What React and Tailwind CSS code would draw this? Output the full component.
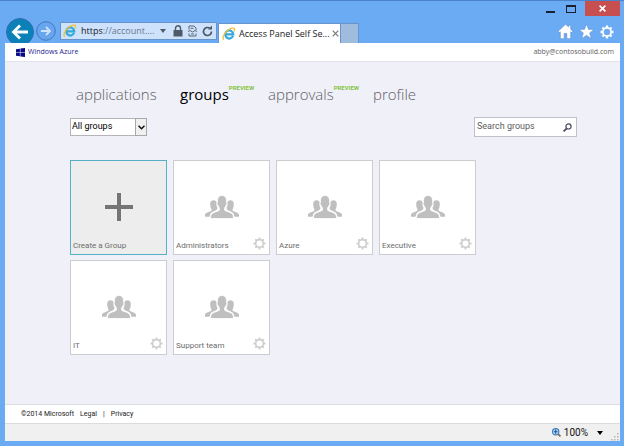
import React from "react";

const tabs = [
  { label: "applications", width: "w-[104px]" },
  { label: "groups", width: "w-[88px]", active: true, preview: true },
  { label: "approvals", width: "w-[105px]", preview: true },
  { label: "profile", width: "w-auto" },
];

const groups = ["Administrators", "Azure", "Executive", "IT", "Support team"];

function IELogo({ className }) {
  return (
    <svg viewBox="0 0 16 16" className={className} aria-hidden="true">
      <path d="M12.6 10.2A4.6 4.6 0 1 1 12.9 8.4H4.6" fill="none" stroke="#35a8dc" strokeWidth="2.5" />
      <path d="M2.2 14.6C-.4 13 2.4 7.6 6 4.4 9.5 1.3 14 .2 14.4 2.2c.2.9-.3 1.9-.8 2.7" fill="none" stroke="#ecc13c" strokeWidth="1.5" />
    </svg>
  );
}

function GearIcon({ className, spokes = 3 }) {
  return (
    <svg viewBox="0 0 16 16" className={className} fill="none" stroke="currentColor" aria-hidden="true">
      <circle cx="8" cy="8" r="4.7" strokeWidth="2" />
      <g strokeWidth={spokes}>
        <path d="M8 .6v2.600M8 12.800v2.600M.6 8h2.600M12.800 8h2.600M2.800 2.800l1.800 1.800M11.400 11.400l1.800 1.800M13.200 2.800l-1.800 1.800M4.600 11.400l-1.800 1.800" />
      </g>
    </svg>
  );
}

function PeopleIcon() {
  return (
    <svg viewBox="0 0 34 24" className="h-6 w-[34px]" fill="#bfbfbf" aria-hidden="true">
      <path d="M5.2 9c0-2.500 1.300-3.700 3.300-3.700 1.500 0 2.600.7 3 1.900v3c0 1.300.8 1.800 1 2.800-.2 1.200-.9 2-1.900 2.600-2.600 1-4.700 2-5.500 3.800l-.6 2.300H0v-2.100c.4-2 3.500-2.500 5.900-3.700.8-.4.7-1.500.3-2.200C5.500 12.500 5.200 10.600 5.200 9z" />
      <path d="M28.800 9c0-2.500-1.300-3.700-3.300-3.700-1.500 0-2.600.7-3 1.900v3c0 1.300-.8 1.800-1 2.800.2 1.200.9 2 1.900 2.600 2.600 1 4.700 2 5.500 3.800l.6 2.300H34v-2.100c-.4-2-3.500-2.500-5.900-3.700-.8-.4-.7-1.500-.3-2.200.7-1.200 1-3.100 1-4.700z" />
      <path
        d="M12.500 5.200C12.500 2.200 14.300.5 17 .5s4.500 1.700 4.500 4.700v2.300c.8.6.4 2.400-.5 3-.3 1-.8 1.700-1.400 2.300v2.400c1.800 1.600 7.500 1.800 8.500 5l.5 3.300H5.400l.5-3.300c1-3.200 6.700-3.400 8.500-5v-2.400c-.6-.6-1.100-1.300-1.400-2.300-.9-.6-1.300-2.400-.5-3z"
        stroke="#fff"
        strokeWidth=".8"
      />
    </svg>
  );
}

function TitleBar() {
  return (
    <header className="flex h-[43px] justify-between border-t border-[#4a82cc]">
      <div className="flex min-w-0 items-end">
        <button aria-label="Back" className="-mb-[3px] ml-1.5 shrink-0">
          <svg viewBox="0 0 28 28" className="block size-7">
            <circle cx="14" cy="14" r="13.5" fill="#0c80b8" stroke="#2f6fae" />
            <path d="M22 14H8M14 7.500L7.500 14l6.500 6.500" fill="none" stroke="#fff" strokeWidth="2.8" />
          </svg>
        </button>
        <button aria-label="Forward" className="mb-0.5 ml-0.5 shrink-0">
          <svg viewBox="0 0 20 20" className="block size-5">
            <circle cx="10" cy="10" r="9.3" fill="#67a5ee" stroke="#4478b8" />
            <path d="M5 10h9M10 6l4 4-4 4" fill="none" stroke="#cfe3fb" strokeWidth="1.8" />
          </svg>
        </button>
        <div className="mb-[3px] ml-1 flex h-[18px] w-[157px] items-center border border-[#6794cd] bg-[#cfe2fb] pl-0.5 text-[#4e5a68]">
          <IELogo className="size-[14px] shrink-0" />
          <input
            aria-label="Address"
            className="sr-only"
            readOnly
            value="https://account...."
          />
          <span className="ml-1 w-[76px] whitespace-nowrap font-['Open_Sans',sans-serif] text-[9px] leading-4 text-[#66788f]">
            <span className="text-[#15191f]">https</span>://account....
          </span>
          <button aria-label="Show address list" className="ml-[3px]">
            <svg viewBox="0 0 6 4" className="block h-1 w-1.5" fill="currentColor"><path d="M0 0h6L3 4z" /></svg>
          </button>
          <button aria-label="Security report" className="ml-[7px]">
            <svg viewBox="0 0 10 12" className="block h-3 w-2.5" fill="currentColor">
              <path d="M.5 5h9v6.500h-9z" />
              <path d="M2.500 5.500V3.300a2.500 2.500 0 0 1 5 0v2.200" fill="none" stroke="currentColor" strokeWidth="1.4" />
            </svg>
          </button>
          <button aria-label="Compatibility view" className="ml-[5px]">
            <svg viewBox="0 0 9 12" className="block h-3 w-[9px]" fill="none" stroke="currentColor" strokeWidth=".9">
              <path d="M1 4.500V1h5l2 2v2M1 8.500V11h7V8.500M2.500 3.300h3M0 6.500l2-1 2.500 1.500L7 5.500l2 1M3 9h3" />
            </svg>
          </button>
          <button aria-label="Refresh" className="ml-[5px]">
            <svg viewBox="0 0 11 12" className="block h-3 w-[11px]" fill="none" stroke="currentColor" strokeWidth="1.7">
              <path d="M9.500 6.500a4 4 0 1 1-1.600-3.200" />
              <path d="M6 4.600h4V.5z" fill="currentColor" stroke="none" />
            </svg>
          </button>
        </div>
        <div className="ml-px flex h-5 w-[123px] items-center border-x border-t border-[#6794cd] bg-white pl-[3px]">
          <IELogo className="size-[14px] shrink-0" />
          <span className="ml-[3px] w-[91px] whitespace-nowrap font-['Open_Sans',sans-serif] text-[9px] leading-4 text-[#222]">Access Panel Self Se...</span>
          <button aria-label="Close tab" className="ml-0.5">
            <svg viewBox="0 0 7 7" className="block size-[7px]" stroke="#777" strokeWidth="1.2"><path d="M.7.7l5.600 5.600M6.300.7L.7 6.300" /></svg>
          </button>
        </div>
        <button aria-label="New tab" className="h-5 w-[18px] border-r border-t border-[#6794cd] bg-[#9fbbdd]" />
      </div>
      <div className="flex flex-col items-end justify-between pr-1">
        <div className="flex h-[15px] items-center">
          <button aria-label="Minimize" className="flex h-[15px] w-[18px] items-end justify-center pb-[3px]">
            <span className="h-0.5 w-[9px] bg-[#16222f]" />
          </button>
          <button aria-label="Maximize" className="flex h-[15px] w-6 items-center justify-center">
            <span className="h-[8px] w-[10px] border border-t-2 border-[#16222f]" />
          </button>
          <button aria-label="Close" className="ml-0.5 flex h-[15px] w-[35px] items-center justify-center bg-[#c74f50]">
            <svg viewBox="0 0 7 7" className="size-[7px]" stroke="#fff" strokeWidth="1.7"><path d="M.6.6l5.800 5.800M6.400.6L.6 6.400" /></svg>
          </button>
        </div>
        <div className="mb-1 mr-1.5 flex items-center gap-1.5 text-white">
          <button aria-label="Home">
            <svg viewBox="0 0 15 15" className="block size-[15px]" fill="#fff" stroke="#4c7fbf" strokeWidth=".5">
              <path d="M7.500.3L.2 7.300l1.200 1.200.9-.8v7h3.900V9.500h2.600v5.200h3.900v-7l.9.8 1.200-1.200-2.100-2.100V1.200h-2.100v1.700z" />
            </svg>
          </button>
          <button aria-label="Favorites">
            <svg viewBox="0 0 15 15" className="block size-[15px]" fill="#fff" stroke="#4c7fbf" strokeWidth=".4">
              <path d="M7.500.2l2 5.200H15l-4.400 3.500 1.600 5.600-4.700-3.300-4.700 3.300 1.600-5.600L0 5.400h5.500z" />
            </svg>
          </button>
          <button aria-label="Tools"><GearIcon className="block size-[14px]" spokes={2.6} /></button>
        </div>
      </div>
    </header>
  );
}

function Card({ children, label, create }) {
  return (
    <li
      className={
        "relative h-[95px] w-[97px] border " +
        (create ? "border-[#56b0c6] bg-[#ededed]" : "border-[#cdcdd1] bg-white")
      }
    >
      <button className="flex size-full items-center justify-center pb-0.5">
        {children}
        <span className="absolute bottom-[3px] left-0.5 whitespace-nowrap font-['Roboto',sans-serif] text-[8px] leading-[10px] text-[#6c6c6c]">{label}</span>
      </button>
      {!create && (
        <button aria-label={label + " settings"} className="absolute bottom-1 right-[3px] text-[#cfcfcf]">
          <GearIcon className="block size-[13px]" spokes={2.4} />
        </button>
      )}
    </li>
  );
}

export default function App() {
  return (
    <div className="flex min-h-screen flex-col bg-[#6babf4] font-['Open_Sans','Noto_Sans',sans-serif]">
      <TitleBar />
      <div className="mb-[5px] ml-[5px] mr-1 flex grow flex-col">
        <div className="z-10 flex h-[19px] items-center justify-between border-b border-[#e2e2e8] bg-white pl-[11px] pr-1.5 text-[7px] leading-3">
          <a href="#home" className="flex items-center gap-[3px] text-[#1c1c8c]">
            <svg viewBox="0 0 9 9" className="size-[9px]" fill="#0a0a86" aria-hidden="true">
              <path d="M0 1.300l3.900-.6v3.600H0zM4.400.6L9 0v4.300H4.400zM0 4.700h3.900v3.600L0 7.700zM4.400 4.700H9V9l-4.600-.6z" />
            </svg>
            Windows Azure
          </a>
          <span className="text-[#5e5e5e]">abby@contosobuild.com</span>
        </div>

        <main className="grow bg-[#f0f0f9] pb-5 pl-[65px] pr-[43px] pt-5">
          <nav aria-label="Main">
            <ul className="flex pl-1.5">
              {tabs.map((t) => (
                <li key={t.label} className={"flex items-start " + t.width}>
                  <a
                    href={"#" + t.label}
                    className={"text-[15px] leading-6 " + (t.active ? "font-normal text-black" : "font-light text-[#5e5e62]")}
                  >
                    {t.label}
                  </a>
                  {t.preview && (
                    <span className="pt-0.5 font-['Roboto',sans-serif] text-[6px] font-bold leading-[8px] text-[#84c441]">PREVIEW</span>
                  )}
                </li>
              ))}
            </ul>
          </nav>

          <div className="mt-[11px] flex items-center justify-between font-['Roboto',sans-serif] text-[9px]">
            <div className="relative h-[18px] w-[77px]">
              <select
                aria-label="Filter groups"
                className="block size-full appearance-none border border-[#b4b4b8] bg-white pl-px text-black"
              >
                <option>All groups</option>
              </select>
              <span className="pointer-events-none absolute inset-y-0 right-0 flex w-3 items-center justify-center border border-[#a8a8a8] bg-[#f0f0f0]">
                <svg viewBox="0 0 7 5" className="h-[5px] w-[7px]" fill="none" stroke="#111" strokeWidth="1.5"><path d="M.5.8l3 3 3-3" /></svg>
              </span>
            </div>
            <form className="flex h-5 w-[103px] items-center border border-[#c0c0c6] bg-white pl-0.5 pr-1">
              <input
                type="text"
                aria-label="Search groups"
                placeholder="Search groups"
                className="min-w-0 grow outline-none placeholder:text-[#5c5c5c]"
              />
              <button type="button" aria-label="Search">
                <svg viewBox="0 0 9 9" className="block size-[9px]" fill="none" stroke="#444a58" strokeWidth="1.2">
                  <circle cx="5.5" cy="3.4" r="2.6" />
                  <path d="M3.700 5.300L.6 8.300" strokeWidth="1.7" />
                </svg>
              </button>
            </form>
          </div>

          <ul className="mt-[23px] flex flex-wrap gap-x-1.5 gap-y-[5px]">
            <Card label="Create a Group" create>
              <svg viewBox="0 0 28 28" className="size-7" stroke="#757575" strokeWidth="4" aria-hidden="true"><path d="M14 0v28M0 14h28" /></svg>
            </Card>
            {groups.map((g) => (
              <Card key={g} label={g}>
                <PeopleIcon />
              </Card>
            ))}
          </ul>
        </main>

        <footer className="flex h-[19px] items-center gap-1.5 border-t border-[#dedee2] bg-white pl-4 font-['Roboto',sans-serif] text-[7px] leading-3 text-[#222]">
          <span>©2014 Microsoft</span>
          <a href="#legal">Legal</a>
          <span>|</span>
          <a href="#privacy">Privacy</a>
        </footer>
        <div className="flex h-[18px] items-center justify-end border-t border-[#dcdcdc] bg-[#f0f0f0] font-['Roboto',sans-serif] text-[10px] leading-4 text-[#111]">
          <button className="flex items-center gap-[3px]">
            <svg viewBox="0 0 8 8" className="size-[9px]" fill="none" aria-hidden="true">
              <path d="M5 5l2.500 2.500" stroke="#8a6a4a" strokeWidth="1.5" />
              <circle cx="3.3" cy="3.3" r="2.8" fill="#bfe0fa" stroke="#3c78b8" />
              <path d="M3.300 1.600V5M1.600 3.300H5" stroke="#1c4fa0" />
            </svg>
            100%
            <svg viewBox="0 0 6 4" className="ml-1.5 h-1 w-1.5" aria-hidden="true"><path d="M0 0h6L3 4z" /></svg>
          </button>
          <svg viewBox="0 0 8 8" className="ml-2 mr-px size-2 self-end" fill="#b4b4b4" aria-hidden="true">
            <path d="M6 0h1.500v1.500H6zM6 3h1.500v1.500H6zM6 6h1.500v1.500H6zM3 3h1.500v1.500H3zM3 6h1.500v1.500H3zM0 6h1.500v1.500H0z" />
          </svg>
        </div>
      </div>
    </div>
  );
}
